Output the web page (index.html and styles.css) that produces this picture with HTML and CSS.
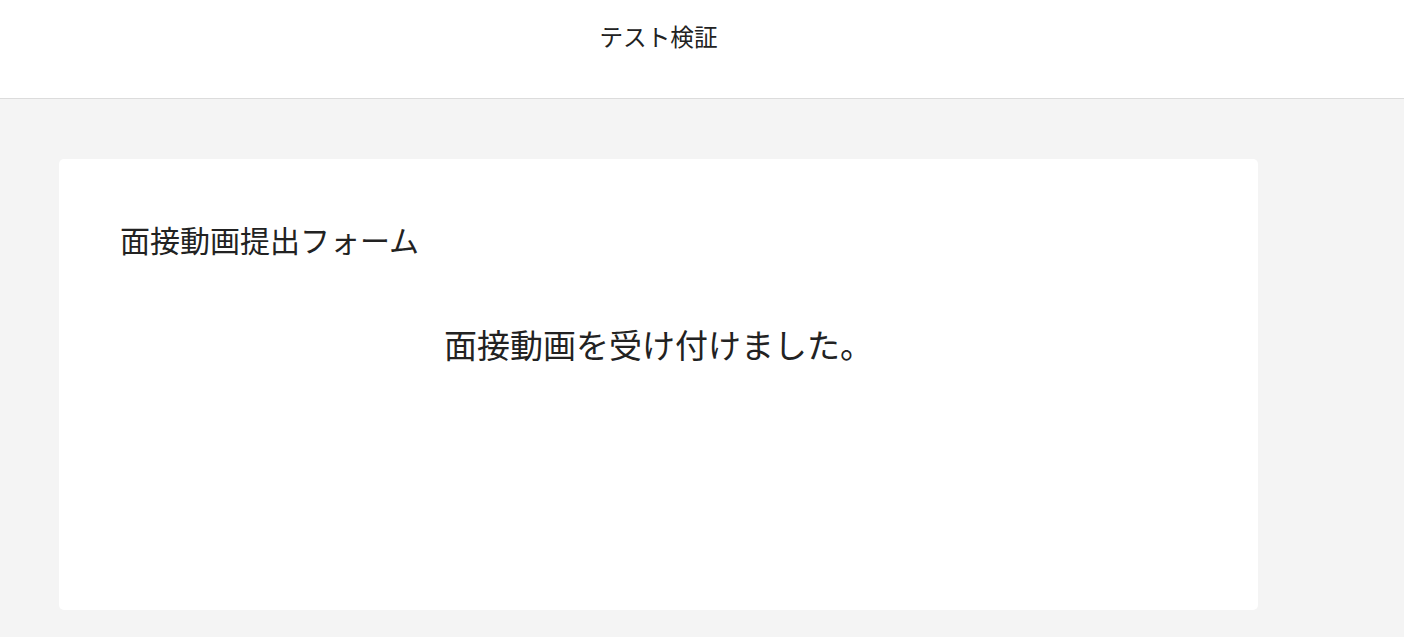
FILE: index.html
```html
<!DOCTYPE html>
<html lang="ja">
<head>
<meta charset="utf-8">
<title>テスト検証</title>
<link rel="stylesheet" href="styles.css">
</head>
<body>
<header class="site-header">
  <div class="container">
    <div class="site-title">テスト検証</div>
  </div>
</header>
<main class="main">
  <div class="container">
    <section class="card">
      <h1 class="card-title">面接動画提出フォーム</h1>
      <p class="message">面接動画を受け付けました。</p>
    </section>
  </div>
</main>
</body>
</html>
```

FILE: styles.css
```css
html, body {
  margin: 0;
  padding: 0;
}
body {
  background: #f4f4f4;
  color: #222;
  font-family: "Noto Sans CJK JP", "Noto Sans", sans-serif;
  min-height: 637px;
}
.container {
  width: 1199px;
  margin-left: 59px;
}
.site-header {
  background: #fff;
  height: 98px;
  border-bottom: 1px solid #dcdcdc;
}
.site-title {
  text-align: center;
  font-size: 23.6px;
  line-height: 34px;
  padding-top: 19px;
}
.main {
  padding-top: 60px;
}
.card {
  background: #fff;
  border-radius: 5px;
  height: 451px;
  box-sizing: border-box;
  padding: 57px 61px 0;
}
.card-title {
  margin: 0;
  font-weight: normal;
  font-size: 30px;
  line-height: 46px;
}
.message {
  margin: 58px 0 0;
  text-align: center;
  font-size: 33px;
  line-height: 48px;
}
```
